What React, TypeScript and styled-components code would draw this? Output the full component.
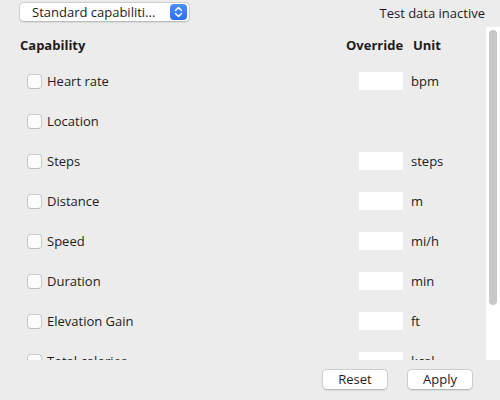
import React from "react";
import styled, { createGlobalStyle } from "styled-components";

const Global = createGlobalStyle`
  html, body { margin: 0; padding: 0; }
  body {
    width: 500px; height: 400px; overflow: hidden;
    background: #ececec;
    font-family: "Open Sans", "DejaVu Sans", sans-serif;
    font-size: 13px; color: #1c1c1c;
  }
`;

const Window = styled.div`
  width: 500px; height: 400px;
  display: flex; flex-direction: column;
  background: #ececec;
`;

const TopBar = styled.div`
  height: 27px; flex: none;
  display: flex; align-items: flex-start; justify-content: space-between;
  padding: 2px 15px 0 19px; box-sizing: border-box;
`;

const Select = styled.div`
  width: 171px; height: 20px; box-sizing: border-box;
  display: flex; align-items: center; justify-content: space-between;
  padding: 0 2px 0 12px;
  background: #fff;
  border: 1px solid #cfcfcf; border-bottom-color: #bdbdbd;
  border-radius: 5px;
  box-shadow: 0 0.5px 1px rgba(0,0,0,0.08);
  font-size: 13px; color: #1c1c1c;
`;

const Stepper = styled.div`
  width: 17px; height: 16px; border-radius: 4px;
  background: linear-gradient(#4a8ff8, #2a6ef2);
  display: flex; align-items: center; justify-content: center;
`;

const Status = styled.div`
  line-height: 22px; font-size: 13px; color: #1c1c1c;
`;

const ScrollArea = styled.div`
  height: 333px; flex: none;
  display: flex;
`;

const Content = styled.div`
  flex: 1; overflow: hidden;
`;

const Track = styled.div`
  width: 14px; flex: none; background: #fff;
  padding: 3px; box-sizing: border-box;
`;

const Thumb = styled.div`
  width: 8px; height: 275px; border-radius: 4px; background: #c8c8c8;
`;

const Header = styled.div`
  display: grid; grid-template-columns: 326px 67px 1fr;
  padding: 8px 0 0 20px; height: 34px; box-sizing: border-box;
  font-weight: 700; font-size: 13px; line-height: 20px;
`;

const Row = styled.div`
  height: 40px; box-sizing: border-box;
  display: grid; grid-template-columns: 324px 44px 1fr; column-gap: 8px;
  align-items: center; padding-left: 27px;
`;

const Cap = styled.label`
  display: flex; align-items: center; gap: 5px;
`;

const Check = styled.span`
  width: 15px; height: 15px; box-sizing: border-box;
  border: 1px solid #c9c9c9; border-bottom-color: #b9b9b9;
  border-radius: 4px; background: #fbfbfb;
  box-shadow: inset 0 1px 0 #fff;
`;

const Field = styled.div`
  width: 44px; height: 18px; background: #fff;
`;

const Footer = styled.div`
  flex: 1;
  display: flex; justify-content: flex-end; align-items: flex-start;
  gap: 19px; padding: 9px 27px 0 0;
`;

const Button = styled.button`
  width: 66px; height: 21px; box-sizing: border-box;
  background: #fff; border: 1px solid #cdcdcd; border-bottom-color: #b8b8b8;
  border-radius: 5px;
  box-shadow: 0 0.5px 1px rgba(0,0,0,0.08);
  font-family: inherit; font-size: 13px; color: #1c1c1c;
  padding: 0; line-height: 19px;
`;

const caps: { name: string; unit?: string }[] = [
  { name: "Heart rate", unit: "bpm" },
  { name: "Location" },
  { name: "Steps", unit: "steps" },
  { name: "Distance", unit: "m" },
  { name: "Speed", unit: "mi/h" },
  { name: "Duration", unit: "min" },
  { name: "Elevation Gain", unit: "ft" },
  { name: "Total calories", unit: "kcal" },
];

export default function App() {
  return (
    <Window>
      <Global />
      <TopBar>
        <Select>
          <span>Standard capabiliti...</span>
          <Stepper>
            <svg width="9" height="12" viewBox="0 0 9 12" fill="none" stroke="#fff" strokeWidth="1.5" strokeLinecap="round" strokeLinejoin="round">
              <path d="M1.5 4.5 L4.5 1.5 L7.5 4.5" />
              <path d="M1.5 7.5 L4.5 10.5 L7.5 7.5" />
            </svg>
          </Stepper>
        </Select>
        <Status>Test data inactive</Status>
      </TopBar>
      <ScrollArea>
        <Content>
          <Header>
            <span>Capability</span>
            <span>Override</span>
            <span>Unit</span>
          </Header>
          {caps.map((c) => (
            <Row key={c.name}>
              <Cap>
                <Check />
                <span>{c.name}</span>
              </Cap>
              {c.unit ? <Field /> : <span />}
              <span>{c.unit ?? ""}</span>
            </Row>
          ))}
        </Content>
        <Track>
          <Thumb />
        </Track>
      </ScrollArea>
      <Footer>
        <Button>Reset</Button>
        <Button>Apply</Button>
      </Footer>
    </Window>
  );
}
